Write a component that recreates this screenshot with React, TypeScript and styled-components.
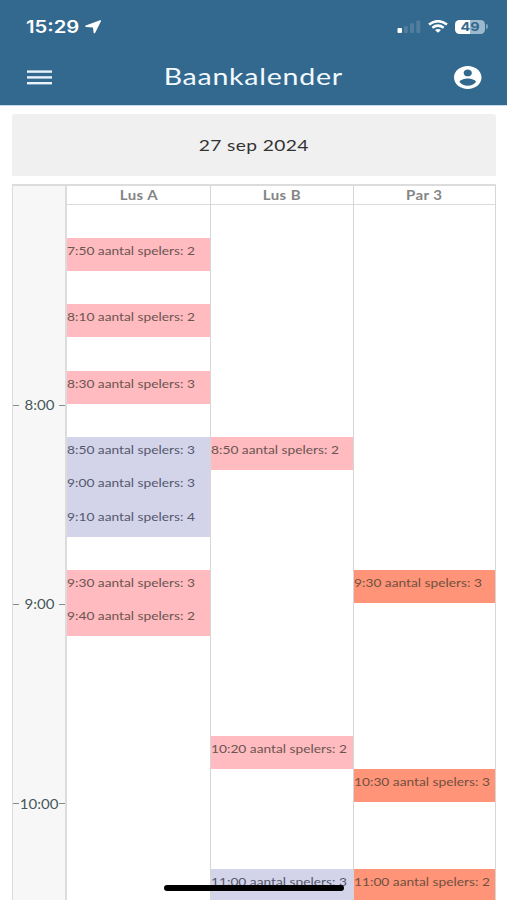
import React from "react";
import styled, { createGlobalStyle } from "styled-components";

const GlobalStyle = createGlobalStyle`
  * { box-sizing: border-box; }
  html, body { margin: 0; background: #fff; overflow: hidden; }
`;

const TEXT_FONT = `Lato, "Open Sans", sans-serif`;
const LINE = "#dcdcdc";
const SLOT = 33.22;

const Screen = styled.div`
  position: relative;
  display: flex;
  flex-direction: column;
  width: 507px;
  height: 900px;
  overflow: hidden;
  background: #fff;
  font-family: ${TEXT_FONT};
`;

const Wide = styled.span<{ $x: number; $origin?: string }>`
  display: inline-block;
  white-space: nowrap;
  transform: scaleX(${(p) => p.$x});
  transform-origin: ${(p) => p.$origin ?? "center"};
`;

const Header = styled.header`
  display: flex;
  flex-direction: column;
  flex: none;
  height: 106px;
  background: #33698e;
  border-bottom: 1px solid #c9dcee;
  color: #fff;
`;

const StatusBar = styled.div`
  display: flex;
  align-items: center;
  height: 53px;
  padding: 0 19px 0 26px;
`;

const Clock = styled.div`
  width: 59px;
  font: 600 17px/20px Inter, sans-serif;
`;

const StatusIcons = styled.div`
  display: flex;
  align-items: center;
  margin-left: auto;
  gap: 7px;
`;

const Battery = styled.div`
  display: flex;
  align-items: center;
  gap: 1px;
`;

const BatteryBody = styled.div`
  display: grid;
  place-items: center;
  width: 30px;
  height: 14px;
  border-radius: 4.5px;
  background: linear-gradient(90deg, #fff 49%, #9db9cd 49%);
  color: #33698e;
  font: 700 12px/14px Inter, sans-serif;
`;

const BatteryTip = styled.div`
  width: 2px;
  height: 5px;
  border-radius: 0 2px 2px 0;
  background: #7fa3bc;
`;

const TitleBar = styled.div`
  display: grid;
  grid-template-columns: 60px 1fr 60px;
  align-items: center;
  height: 48px;
`;

const MenuButton = styled.button`
  display: flex;
  margin: 0 0 0 27px;
  padding: 0;
  border: 0;
  background: none;
`;

const Title = styled.h1`
  margin: 0;
  padding-bottom: 2px;
  text-align: center;
  font-size: 23px;
  font-weight: 400;
  line-height: 30px;
  letter-spacing: 0.6px;
  color: #f2f9ff;
`;

const ProfileButton = styled.button`
  display: flex;
  margin: 0;
  padding: 0 0 0 7px;
  border: 0;
  background: none;
`;

const DateBar = styled.div`
  display: grid;
  place-items: center;
  flex: none;
  height: 62px;
  margin: 8px 11px 0 12px;
  border-radius: 3px 3px 0 0;
  background: #f0f0f0;
  color: #333;
  font-size: 16px;
  line-height: 20px;
  letter-spacing: 0.3px;
`;

const Calendar = styled.main`
  display: grid;
  grid-template-columns: 55px 144px 143px 142px;
  flex: none;
  height: 740px;
  margin: 8px 11px 0 12px;
  border-top: 2px solid ${LINE};
`;

const TimeColumn = styled.div`
  display: flex;
  flex-direction: column;
  padding-top: 208px;
  background: #f7f7f7;
  border-left: 1.5px solid ${LINE};
  border-right: 2px solid ${LINE};
`;

const HourMark = styled.div`
  display: grid;
  grid-template-columns: 6px 1fr 6px;
  align-items: center;
  flex: none;
  height: ${SLOT * 6}px;
  padding-bottom: ${SLOT * 6 - 20}px;
  color: #44585a;
  font-size: 12.5px;
  line-height: 20px;
  text-align: center;
`;

const Tick = styled.span`
  height: 1px;
  background: #80908f;
`;

const HourLabel = styled.span`
  display: flex;
  justify-content: center;
  padding-top: 2px;
`;

const LaneColumn = styled.section`
  display: flex;
  flex-direction: column;
  min-width: 0;
  border-right: 1px solid #d6d6d6;
`;

const LaneName = styled.h2`
  flex: none;
  height: 18.5px;
  margin: 0;
  border-bottom: 1px solid ${LINE};
  color: #858585;
  font-size: 12.5px;
  font-weight: 700;
  line-height: 19px;
  letter-spacing: 0.35px;
  text-align: center;
`;

const Slots = styled.div`
  display: grid;
  grid-template-rows: repeat(22, ${SLOT}px);
`;

const tones = { pink: "#ffbbbf", lilac: "#d3d4ea", orange: "#ff9478" };
const inks = { pink: "#6b5552", lilac: "#53586c", orange: "#6f5140" };
type Tone = keyof typeof tones;

const Booking = styled.div<{ $row: number; $tone: Tone }>`
  grid-row: ${(p) => p.$row};
  padding-top: 4.15px;
  background: ${(p) => tones[p.$tone]};
  color: ${(p) => inks[p.$tone]};
  font-size: 11.5px;
  line-height: 18px;
`;

const HomeIndicator = styled.div`
  position: absolute;
  left: 164px;
  top: 885px;
  width: 180px;
  height: 6px;
  border-radius: 3px;
  background: #000;
`;

interface Entry { time: string; players: number; tone: Tone; }

const lanes: { name: string; entries: Entry[] }[] = [
  {
    name: "Lus A",
    entries: [
      { time: "7:50", players: 2, tone: "pink" },
      { time: "8:10", players: 2, tone: "pink" },
      { time: "8:30", players: 3, tone: "pink" },
      { time: "8:50", players: 3, tone: "lilac" },
      { time: "9:00", players: 3, tone: "lilac" },
      { time: "9:10", players: 4, tone: "lilac" },
      { time: "9:30", players: 3, tone: "pink" },
      { time: "9:40", players: 2, tone: "pink" },
    ],
  },
  {
    name: "Lus B",
    entries: [
      { time: "8:50", players: 2, tone: "pink" },
      { time: "10:20", players: 2, tone: "pink" },
      { time: "11:00", players: 3, tone: "lilac" },
    ],
  },
  {
    name: "Par 3",
    entries: [
      { time: "9:30", players: 3, tone: "orange" },
      { time: "10:30", players: 3, tone: "orange" },
      { time: "11:00", players: 2, tone: "orange" },
    ],
  },
];

/** Grid row of a time; the first row is the 7:40 slot. */
const rowOf = (time: string) => {
  const [h, m] = time.split(":").map(Number);
  return (h * 60 + m - 460) / 10 + 1;
};

const LocationIcon = () => (
  <svg width="17" height="14" viewBox="0 0 17 14">
    <path
      d="M15.3.9 1 6.3 8.6 6.8 9.4 12.6Z"
      fill="#fff"
      stroke="#fff"
      strokeWidth="1.5"
      strokeLinejoin="round"
    />
  </svg>
);

const SignalIcon = () => (
  <svg width="24" height="13" viewBox="0 0 24 13">
    <rect x="0.5" y="8" width="4.5" height="5" rx="1" fill="#fff" />
    <rect x="6.8" y="6" width="4" height="7" rx="1" fill="#527e9e" />
    <rect x="13" y="3.2" width="4" height="9.8" rx="1" fill="#527e9e" />
    <rect x="19.3" y="0.5" width="4" height="12.5" rx="1" fill="#527e9e" />
  </svg>
);

const WifiIcon = () => (
  <svg width="20" height="13" viewBox="0 0 20 13" fill="none" stroke="#fff" strokeWidth="2.5">
    <path d="M1 4.5Q10-2.2 19 4.5" />
    <path d="M4.3 7.7Q10 3.6 15.7 7.7" />
    <path d="M7 10.1Q10 8 13 10.1L10 12.7Z" fill="#fff" stroke="none" />
  </svg>
);

const MenuIcon = () => (
  <svg width="25" height="15" viewBox="0 0 25 15" fill="#e8f3fb">
    <rect y="0.4" width="25" height="2.4" />
    <rect y="6.2" width="25" height="2.4" />
    <rect y="12" width="25" height="2.4" />
  </svg>
);

const ProfileIcon = () => (
  <svg width="27.5" height="23" viewBox="2 2 20 20" preserveAspectRatio="none">
    <path
      fill="#fff"
      d="M12 2C6.48 2 2 6.48 2 12s4.48 10 10 10 10-4.48 10-10S17.52 2 12 2zm0 3c1.66 0 3 1.34 3 3s-1.34 3-3 3-3-1.34-3-3 1.34-3 3-3zm0 14.2c-2.5 0-4.71-1.28-6-3.22.03-1.99 4-3.08 6-3.08 1.99 0 5.97 1.09 6 3.08-1.29 1.94-3.5 3.22-6 3.22z"
    />
  </svg>
);

export default function App() {
  return (
    <Screen>
      <GlobalStyle />
      <Header>
        <StatusBar>
          <Clock><Wide $x={1.19} $origin="left">15:29</Wide></Clock>
          <LocationIcon />
          <StatusIcons>
            <SignalIcon />
            <WifiIcon />
            <Battery>
              <BatteryBody><Wide $x={1.2}>49</Wide></BatteryBody>
              <BatteryTip />
            </Battery>
          </StatusIcons>
        </StatusBar>
        <TitleBar>
          <MenuButton aria-label="Menu"><MenuIcon /></MenuButton>
          <Title><Wide $x={1.24}>Baankalender</Wide></Title>
          <ProfileButton aria-label="Profiel"><ProfileIcon /></ProfileButton>
        </TitleBar>
      </Header>
      <DateBar><Wide $x={1.2}>27 sep 2024</Wide></DateBar>
      <Calendar>
        <TimeColumn>
          {["8:00", "9:00", "10:00"].map((hour) => (
            <HourMark key={hour}>
              <Tick />
              <HourLabel><Wide $x={1.2}>{hour}</Wide></HourLabel>
              <Tick />
            </HourMark>
          ))}
        </TimeColumn>
        {lanes.map((lane) => (
          <LaneColumn key={lane.name}>
            <LaneName><Wide $x={1.2}>{lane.name}</Wide></LaneName>
            <Slots>
              {lane.entries.map((e) => (
                <Booking key={e.time} $row={rowOf(e.time)} $tone={e.tone}>
                  <Wide $x={1.195} $origin="left">{e.time} aantal spelers: {e.players}</Wide>
                </Booking>
              ))}
            </Slots>
          </LaneColumn>
        ))}
      </Calendar>
      <HomeIndicator />
    </Screen>
  );
}
